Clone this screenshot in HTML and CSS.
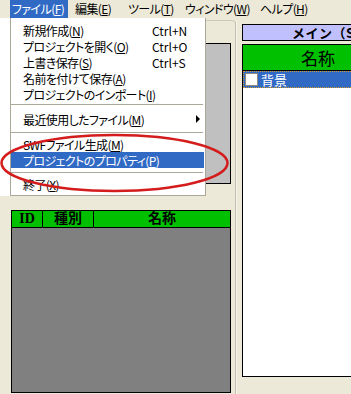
FILE: index.html
```html
<!DOCTYPE html>
<html lang="ja">
<head>
  <meta charset="UTF-8">
  <title>プロジェクト</title>
  <link rel="stylesheet" href="styles.css">
</head>
<body>
  <div class="menubar">
    <span class="menubar-item m-file active">ファイル(<u>F</u>)</span>
    <span class="menubar-item m-edit">編集(<u>E</u>)</span>
    <span class="menubar-item m-tool">ツール(<u>T</u>)</span>
    <span class="menubar-item m-window">ウィンドウ(<u>W</u>)</span>
    <span class="menubar-item">ヘルプ(<u>H</u>)</span>
  </div>

  <div class="workspace">
    <div class="left-pane">
      <div class="preview"></div>
      <div class="object-table">
        <div class="table-head">
          <span class="col-id">ID</span>
          <span class="col-type">種別</span>
          <span class="col-name">名称</span>
        </div>
      </div>
    </div>
    <div class="right-pane">
      <div class="scene-title">メイン（Stage）</div>
      <div class="layer-list">
        <div class="layer-head">名称</div>
        <div class="layer-row"><span class="check"></span>背景</div>
      </div>
    </div>
  </div>

  <!-- open "file" menu -->
  <div class="dropdown">
    <div class="menu">
      <div class="item"><span class="label">新規作成(<u>N</u>)</span><span class="accel">Ctrl+N</span></div>
      <div class="item"><span class="label">プロジェクトを開く(<u>O</u>)</span><span class="accel">Ctrl+O</span></div>
      <div class="item"><span class="label">上書き保存(<u>S</u>)</span><span class="accel">Ctrl+S</span></div>
      <div class="item"><span class="label">名前を付けて保存(<u>A</u>)</span></div>
      <div class="item"><span class="label">プロジェクトのインポート(<u>I</u>)</span></div>
      <div class="sep sep-first"></div>
      <div class="item item-sub"><span class="label">最近使用したファイル(<u>M</u>)</span><span class="arrow"></span></div>
      <div class="sep"></div>
      <div class="item"><span class="label">SWFファイル生成(<u>M</u>)</span></div>
      <div class="item hover"><span class="label">プロジェクトのプロパティ(<u>P</u>)</span></div>
      <div class="sep"></div>
      <div class="item"><span class="label">終了(<u>X</u>)</span></div>
    </div>
  </div>

  <svg class="annotation" width="351" height="394">
    <ellipse cx="114.5" cy="163" rx="113" ry="28" fill="none" stroke="#d41c1c" stroke-width="2.5"/>
  </svg>
</body>
</html>
```

FILE: styles.css
```css
body {
  margin: 0;
  width: 351px;
  height: 394px;
  overflow: hidden;
  position: relative;
  background: #ece9d8;
  font-family: "Noto Sans CJK JP", "Noto Sans", sans-serif;
  font-size: 12px;
  font-feature-settings: "palt";
  color: #000;
}

u {
  text-decoration-thickness: 1px;
  text-underline-offset: 1px;
}

.menubar {
  display: flex;
  height: 18px;
  line-height: 18px;
  padding-left: 10px;
  letter-spacing: -0.6px;
}

.menubar-item {
  box-sizing: border-box;
  padding: 0 2px;
  margin-right: 5px;
  white-space: nowrap;
}

.m-file { width: 58px; }
.m-edit { width: 48px; }
.m-tool { width: 52px; }
.m-window { width: 70px; }

.menubar-item.active {
  background: #316ac5;
  color: #fff;
}

.workspace {
  display: flex;
  height: 376px;
}

.left-pane {
  box-sizing: border-box;
  width: 236px;
  flex-shrink: 0;
  margin-top: 2px;
  border-top: 1px solid #cdc9b8;
  border-right: 1px solid #c2beac;
  border-top-right-radius: 4px;
  box-shadow: 1px 0 0 #f7f6f0;
}

.preview {
  box-sizing: border-box;
  width: 220px;
  height: 141px;
  margin: 22px 0 0 11px;
  background: #c0c0c0;
  border: 1px solid #000;
}

.object-table {
  box-sizing: border-box;
  width: 220px;
  height: 183px;
  margin: 26px 0 0 11px;
  background: #808080;
  border: 1px solid #000;
}

.table-head {
  display: flex;
  height: 16px;
  line-height: 15px;
  background: #00c000;
  border-bottom: 1px solid #000;
  font-family: "Liberation Serif", "Noto Sans CJK JP", serif;
  font-size: 14px;
  font-weight: bold;
  text-align: center;
}

.col-id {
  width: 30px;
  border-right: 1px solid #000;
}

.col-type {
  width: 50px;
  border-right: 1px solid #000;
}

.col-name {
  flex: 1;
}

.right-pane {
  padding-left: 6px;
}

.scene-title {
  box-sizing: border-box;
  width: 160px;
  height: 17px;
  margin-top: 6px;
  padding-left: 49px;
  line-height: 15px;
  background: #c0c0ff;
  border: 1px solid #000;
  font-size: 13px;
  font-weight: bold;
  font-feature-settings: normal;
  letter-spacing: 0.5px;
  white-space: nowrap;
  overflow: hidden;
}

.layer-list {
  box-sizing: border-box;
  width: 152px;
  height: 333px;
  margin-top: 3px;
  background: #fff;
  border: 1px solid #000;
}

.layer-head {
  box-sizing: border-box;
  height: 26px;
  line-height: 25px;
  background: #00c000;
  border-bottom: 1px solid #000;
  font-size: 17px;
  text-align: center;
}

.layer-row {
  box-sizing: border-box;
  display: flex;
  align-items: center;
  gap: 3px;
  height: 17px;
  padding-left: 1px;
  background: #316ac5;
  border: 1px dotted #d09a2c;
  color: #fff;
  font-size: 13px;
}

.check {
  box-sizing: border-box;
  width: 13px;
  height: 13px;
  background: #fff;
  border: 1px solid #8d8a80;
}

.dropdown {
  position: absolute;
  top: 18px;
  left: 0;
  width: 206px;
  padding-left: 10px;
  box-sizing: border-box;
  background: #fff;
  letter-spacing: -0.6px;
}

.menu {
  padding: 4px 0 3px;
  border-left: 1px solid #aca899;
  border-right: 1px solid #aca899;
  border-bottom: 1px solid #aca899;
}

.item {
  display: flex;
  align-items: center;
  height: 16px;
  margin-right: 1px;
  padding-left: 12px;
  white-space: nowrap;
}

.item .label {
  width: 129px;
}

.item .accel {
  letter-spacing: 0;
}

.item-sub {
  height: 18px;
}

.arrow {
  margin-left: auto;
  margin-right: 4px;
  border-left: 4px solid #000;
  border-top: 4px solid transparent;
  border-bottom: 4px solid transparent;
}

.item.hover {
  background: #316ac5;
  color: #fff;
}

.sep {
  height: 1px;
  margin: 4px 2px 3px 0;
  background: #aca899;
}

.sep-first {
  margin: 2px 2px 5px 0;
}

.annotation {
  position: absolute;
  top: 0;
  left: 0;
  pointer-events: none;
}
```
